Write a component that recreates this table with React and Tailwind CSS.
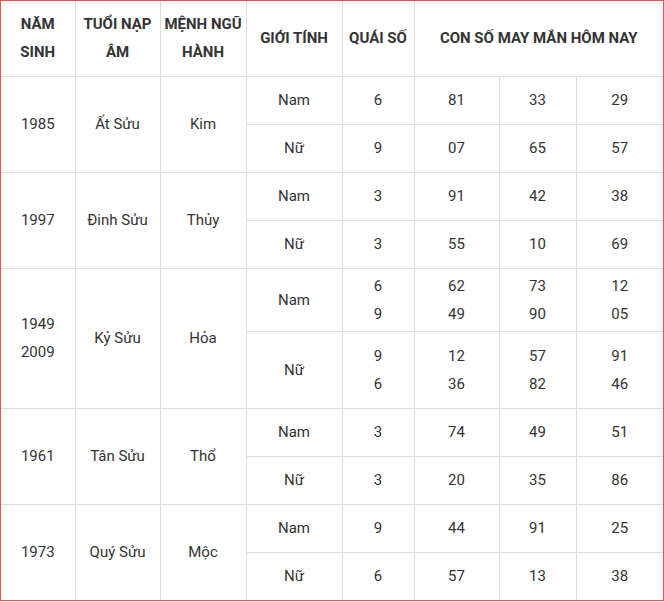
const rows = [
  {
    year: ["1985"], tuoi: "Ất Sửu", menh: "Kim",
    sub: [
      { gt: "Nam", qs: ["6"], nums: [["81"], ["33"], ["29"]], h: "h-[48px]" },
      { gt: "Nữ", qs: ["9"], nums: [["07"], ["65"], ["57"]], h: "h-[48px]" },
    ],
  },
  {
    year: ["1997"], tuoi: "Đinh Sửu", menh: "Thủy",
    sub: [
      { gt: "Nam", qs: ["3"], nums: [["91"], ["42"], ["38"]], h: "h-[48px]" },
      { gt: "Nữ", qs: ["3"], nums: [["55"], ["10"], ["69"]], h: "h-[48px]" },
    ],
  },
  {
    year: ["1949", "2009"], tuoi: "Kỷ Sửu", menh: "Hỏa",
    sub: [
      { gt: "Nam", qs: ["6", "9"], nums: [["62", "49"], ["73", "90"], ["12", "05"]], h: "h-[63px]" },
      { gt: "Nữ", qs: ["9", "6"], nums: [["12", "36"], ["57", "82"], ["91", "46"]], h: "h-[77px]" },
    ],
  },
  {
    year: ["1961"], tuoi: "Tân Sửu", menh: "Thổ",
    sub: [
      { gt: "Nam", qs: ["3"], nums: [["74"], ["49"], ["51"]], h: "h-[48px]" },
      { gt: "Nữ", qs: ["3"], nums: [["20"], ["35"], ["86"]], h: "h-[48px]" },
    ],
  },
  {
    year: ["1973"], tuoi: "Quý Sửu", menh: "Mộc",
    sub: [
      { gt: "Nam", qs: ["9"], nums: [["44"], ["91"], ["25"]], h: "h-[48px]" },
      { gt: "Nữ", qs: ["6"], nums: [["57"], ["13"], ["38"]], h: "h-[48px]" },
    ],
  },
];

// ô có thể chứa nhiều dòng
function Lines({ items }) {
  return items.map((t, i) => <div key={i}>{t}</div>);
}

export default function App() {
  const cell = "border border-[#dddddd] text-center align-middle p-0";
  return (
    <div className="w-[664px] h-[602px] bg-white font-['Roboto',sans-serif] text-[15px] leading-[28px] text-[#333333]">
      <div className="border border-[#e05555]">
        <table className="w-[662px] table-fixed border-collapse border-hidden">
          <colgroup>
            <col className="w-[74px]" />
            <col className="w-[85px]" />
            <col className="w-[86px]" />
            <col className="w-[96px]" />
            <col className="w-[72px]" />
            <col className="w-[85px]" />
            <col className="w-[77px]" />
            <col className="w-[87px]" />
          </colgroup>
          <thead>
            <tr className="h-[75px] font-bold">
              <th className={cell}>NĂM<br />SINH</th>
              <th className={cell}>TUỔI NẠP<br />ÂM</th>
              <th className={cell}>MỆNH NGŨ<br />HÀNH</th>
              <th className={cell}>GIỚI TÍNH</th>
              <th className={cell}>QUÁI SỐ</th>
              <th className={cell} colSpan={3}>CON SỐ MAY MẮN HÔM NAY</th>
            </tr>
          </thead>
          <tbody>
            {rows.map((r) =>
              r.sub.map((s, j) => (
                <tr key={r.tuoi + j} className={s.h}>
                  {j === 0 && (
                    <>
                      <td className={cell} rowSpan={2}><Lines items={r.year} /></td>
                      <td className={cell} rowSpan={2}>{r.tuoi}</td>
                      <td className={cell} rowSpan={2}>{r.menh}</td>
                    </>
                  )}
                  <td className={cell}>{s.gt}</td>
                  <td className={cell}><Lines items={s.qs} /></td>
                  {s.nums.map((n, k) => (
                    <td key={k} className={cell}><Lines items={n} /></td>
                  ))}
                </tr>
              ))
            )}
          </tbody>
        </table>
      </div>
    </div>
  );
}
